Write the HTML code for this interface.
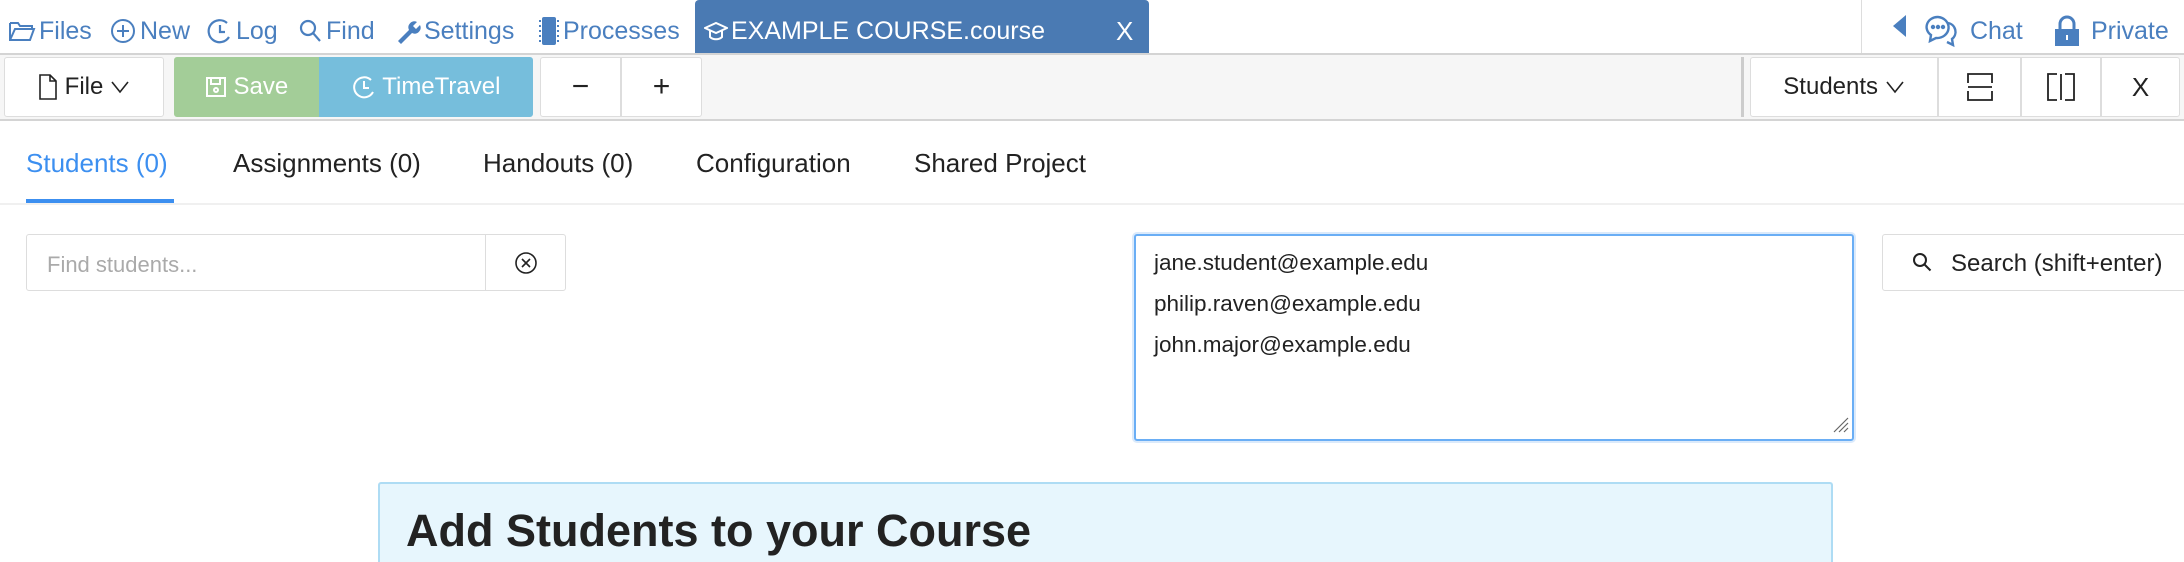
<!DOCTYPE html>
<html><head><meta charset="utf-8">
<style>
*{box-sizing:border-box;margin:0;padding:0}
html{width:2184px;height:562px;overflow:hidden}
body{width:2184px;height:562px;overflow:hidden;background:#fff;font-family:"Liberation Sans",sans-serif;position:relative}
.a{position:absolute}
.nav{color:#4a7fbf;font-size:25px;top:14px;height:34px;display:flex;align-items:center;white-space:nowrap}
.nav svg{margin-right:3px}
.tb{background:#f6f6f6;top:53px;left:0;width:2184px;height:68px;border-top:2px solid #d4d4d4;border-bottom:2px solid #d4d4d4}
.btn{top:57px;height:60px;background:#fff;border:1px solid #ddd;display:flex;align-items:center;justify-content:center;font-size:24px;color:#222}
.tab{top:148px;font-size:26px;color:#222;white-space:nowrap}
</style></head><body>
<div class="a nav" style="left:8px"><svg width="28" height="24" viewBox="0 0 28 24" fill="none" stroke="#4a7fbf" stroke-width="2"><path d="M2 4h8l2 3h12v3M2 4v17h20l4-11H7L2 21"/></svg>Files</div>
<div class="a nav" style="left:109px"><svg width="28" height="28" viewBox="0 0 28 28" fill="none" stroke="#4a7fbf" stroke-width="2"><circle cx="14" cy="14" r="11"/><path d="M14 8v12M8 14h12"/></svg>New</div>
<div class="a nav" style="left:207px"><svg width="26" height="28" viewBox="0 0 26 28" fill="none" stroke="#4a7fbf" stroke-width="2.2"><path d="M20 6A11 11 0 1 0 22 20"/><path d="M13 8v7h5"/></svg>Log</div>
<div class="a nav" style="left:297px"><svg width="26" height="28" viewBox="0 0 26 28" fill="none" stroke="#4a7fbf" stroke-width="2.2"><circle cx="11" cy="11" r="7"/><path d="M16 16l7 8"/></svg>Find</div>
<div class="a nav" style="left:395px"><svg width="26" height="28" viewBox="0 0 26 28"><path d="M3 24l11-11a6 6 0 0 1 8-8l-4 4 3 3 4-4a6 6 0 0 1-8 8L6 27z" fill="#4a7fbf"/></svg>Settings</div>
<div class="a nav" style="left:538px"><svg width="22" height="30" viewBox="0 0 22 30"><rect x="4" y="1" width="14" height="28" rx="2" fill="#4a7fbf"/><path d="M1 5h2M1 10h2M1 15h2M1 20h2M1 25h2M19 5h2M19 10h2M19 15h2M19 20h2M19 25h2" stroke="#4a7fbf" stroke-width="2"/></svg>Processes</div>
<div class="a" style="left:695px;top:0;width:454px;height:53px;background:#4a7ab3;border-radius:4px 4px 0 0"></div>
<div class="a nav" style="left:704px;color:#fff"><svg width="24" height="24" viewBox="0 0 24 24" fill="none" stroke="#fff" stroke-width="2"><path d="M1 9l11-5 11 5-11 5z"/><path d="M6 12v6c3 3 9 3 12 0v-6"/></svg>EXAMPLE COURSE.course</div>
<div class="a nav" style="left:1116px;color:#fff;font-size:26px">X</div>
<div class="a" style="left:1861px;top:0;width:1px;height:53px;background:#ddd"></div>
<div class="a" style="left:1893px;top:15px;width:0;height:0;border-top:11px solid transparent;border-bottom:11px solid transparent;border-right:13px solid #4a7fbf"></div>
<div class="a nav" style="left:1924px"><svg width="36" height="34" viewBox="0 0 36 34" fill="none" stroke="#4a7fbf" stroke-width="2.4"><path d="M14 3a11 10 0 0 0-7 18l-1 6 6-3a11 10 0 1 0 2-21z"/><path d="M24 9a9 9 0 0 1 4 16l1 6-6-3"/><circle cx="9" cy="13" r="1" fill="#4a7fbf"/><circle cx="14" cy="13" r="1" fill="#4a7fbf"/><circle cx="19" cy="13" r="1" fill="#4a7fbf"/></svg>&nbsp;Chat</div>
<div class="a nav" style="left:2053px"><svg width="28" height="32" viewBox="0 0 28 32"><path d="M7 14V9a7 7 0 0 1 14 0v5" fill="none" stroke="#4a7fbf" stroke-width="3"/><rect x="2" y="14" width="24" height="17" fill="#4a7fbf"/><rect x="13" y="20" width="2" height="5" fill="#fff"/></svg>&nbsp;Private</div>
<div class="a tb"></div>
<div class="a btn" style="left:4px;width:160px;border-radius:3px"><svg width="20" height="26" viewBox="0 0 20 26" fill="none" stroke="#222" stroke-width="1.6"><path d="M2 1h10l6 6v18H2zM12 1v6h6"/></svg>&nbsp;File&nbsp;<svg width="20" height="14" viewBox="0 0 20 14" fill="none" stroke="#222" stroke-width="1.6"><path d="M2 2l8 10 8-10"/></svg></div>
<div class="a btn" style="left:174px;width:145px;background:#a3cd98;border-color:#a3cd98;color:#fff;border-radius:3px 0 0 3px"><svg width="22" height="22" viewBox="0 0 22 22" fill="none" stroke="#fff" stroke-width="2"><rect x="2" y="2" width="18" height="18"/><path d="M6 2v6h9V2"/><circle cx="11" cy="14" r="2"/></svg>&nbsp;Save</div>
<div class="a btn" style="left:319px;width:214px;background:#76bedc;border-color:#76bedc;color:#fff;border-radius:0 3px 3px 0"><svg width="24" height="24" viewBox="0 0 24 24" fill="none" stroke="#fff" stroke-width="2"><path d="M19 5A10 10 0 1 0 21 17"/><path d="M12 6v7h5"/></svg>&nbsp;TimeTravel</div>
<div class="a btn" style="left:540px;width:81px;border-radius:3px 0 0 3px;font-size:30px">−</div>
<div class="a btn" style="left:621px;width:81px;border-radius:0 3px 3px 0;font-size:30px">+</div>
<div class="a" style="left:1741px;top:57px;width:3px;height:60px;background:#ccc"></div>
<div class="a btn" style="left:1750px;width:188px;border-radius:3px 0 0 3px">Students&nbsp;<svg width="20" height="14" viewBox="0 0 20 14" fill="none" stroke="#222" stroke-width="1.6"><path d="M2 2l8 10 8-10"/></svg></div>
<div class="a btn" style="left:1938px;width:83px"><svg width="26" height="28" viewBox="0 0 26 28" fill="none" stroke="#222" stroke-width="1.8"><path d="M1 10V1h24v9M1 18v9h24v-9M1 14h24" /></svg></div>
<div class="a btn" style="left:2021px;width:80px"><svg width="28" height="28" viewBox="0 0 28 28" fill="none" stroke="#222" stroke-width="1.8"><path d="M10 1H1v26h9M18 1h9v26h-9M14 1v26"/></svg></div>
<div class="a btn" style="left:2101px;width:79px;border-radius:0 3px 3px 0;font-size:26px">X</div>
<div class="a tab" style="left:26px;color:#3c8ff0">Students (0)</div>
<div class="a tab" style="left:233px">Assignments (0)</div>
<div class="a tab" style="left:483px">Handouts (0)</div>
<div class="a tab" style="left:696px">Configuration</div>
<div class="a tab" style="left:914px">Shared Project</div>
<div class="a" style="left:0;top:203px;width:2184px;height:2px;background:#f0f0f0"></div>
<div class="a" style="left:26px;top:199px;width:148px;height:4px;background:#3c8ff0"></div>
<div class="a" style="left:26px;top:234px;width:460px;height:57px;border:1px solid #ddd;border-radius:3px 0 0 3px;font-size:22px;color:#aaa;padding:17px 0 0 20px">Find students...</div>
<div class="a" style="left:485px;top:234px;width:81px;height:57px;border:1px solid #ddd;border-radius:0 3px 3px 0;display:flex;align-items:center;justify-content:center"><svg width="24" height="24" viewBox="0 0 24 24" fill="none" stroke="#222" stroke-width="1.6"><circle cx="12" cy="12" r="10"/><path d="M8 8l8 8M16 8l-8 8"/></svg></div>
<div class="a" style="left:1134px;top:234px;width:720px;height:207px;border:2px solid #6aaef5;border-radius:3px;box-shadow:0 0 0 2px #dbeafb;font-size:22.5px;color:#222;padding:6px 18px;line-height:41px">jane.student@example.edu<br>philip.raven@example.edu<br>john.major@example.edu</div>
<svg class="a" style="left:1830px;top:414px" width="20" height="20" viewBox="0 0 20 20" stroke="#666" stroke-width="1.2"><path d="M18 4L4 18M18 9L9 18M18 14L14 18"/></svg>
<div class="a" style="left:1882px;top:234px;width:310px;height:57px;border:1px solid #ddd;border-radius:3px;font-size:24px;color:#222;padding:15px 0 0 68px;white-space:nowrap">Search (shift+enter)</div>
<svg class="a" style="left:1910px;top:250px" width="24" height="24" viewBox="0 0 24 24" fill="none" stroke="#222" stroke-width="2"><circle cx="10" cy="10" r="6"/><path d="M14.5 14.5l6 6"/></svg>
<div class="a" style="left:378px;top:482px;width:1455px;height:80px;background:#e7f6fd;border:2px solid #aedcf4;border-bottom:none;border-radius:3px 3px 0 0"></div>
<div class="a" style="left:406px;top:505px;font-size:45px;font-weight:bold;color:#222;white-space:nowrap">Add Students to your Course</div>
</body></html>
